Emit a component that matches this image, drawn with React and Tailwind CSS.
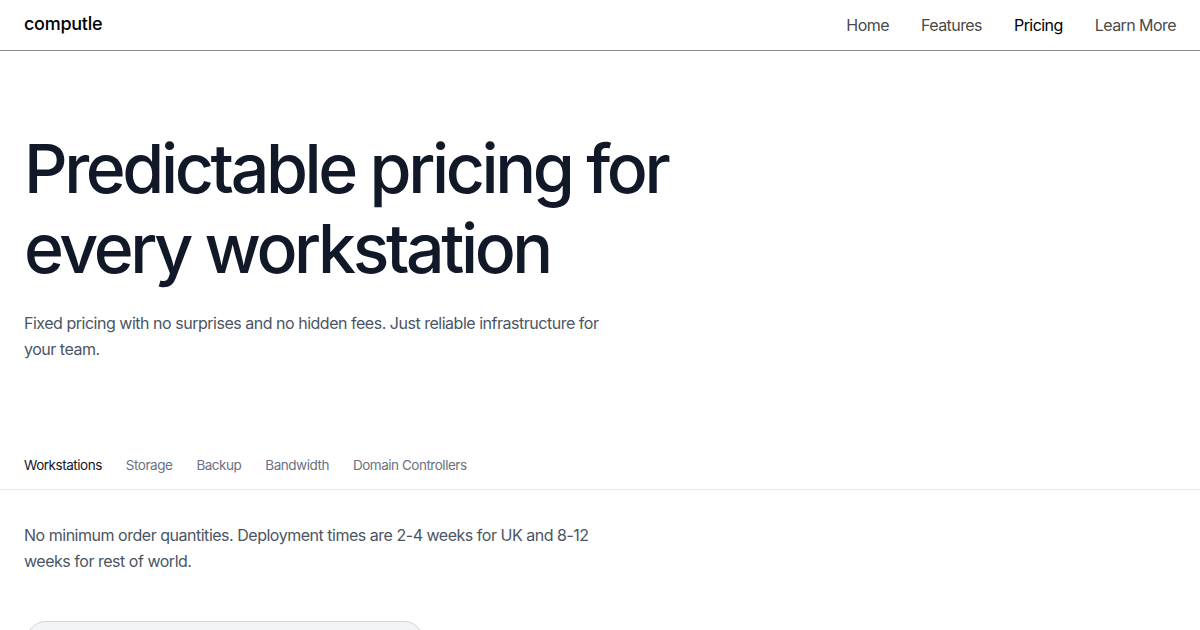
export default function App() {
  const tabs = ["Workstations", "Storage", "Backup", "Bandwidth", "Domain Controllers"];
  return (
    <div className="h-[630px] bg-white font-['Inter',sans-serif] text-gray-900 overflow-hidden">
      <header className="h-[51px] border-b border-[#8a8a8a] px-6 flex items-center justify-between">
        <div className="text-[18px] font-medium tracking-[-0.015em] text-black -mt-[3px]">computle</div>
        <nav className="flex items-center gap-8 text-[16px] tracking-[-0.035em]">
          <span className="text-[#4a4a4a]">Home</span>
          <span className="text-[#4a4a4a]">Features</span>
          <span className="text-black">Pricing</span>
          <span className="text-[#4a4a4a]">Learn More</span>
        </nav>
      </header>
      <section className="px-6 pt-[77px]">
        <h1 className="text-[68px] leading-[80px] font-medium tracking-[-0.05em] text-[#111827] max-w-[700px]">
          Predictable pricing for
          <br />
          every workstation
        </h1>
        <p className="mt-[22px] max-w-[590px] text-[16px] leading-[26px] text-[#4b5563] tracking-[-0.03em]">
          Fixed pricing with no surprises and no hidden fees. Just reliable infrastructure for your team.
        </p>
      </section>
      <div className="mt-[93px] border-b border-gray-200 px-6 pb-[14px] flex gap-6 text-[13.5px] leading-[20px] tracking-[-0.035em]">
        {tabs.map((t, i) => (
          <span key={t} className={i === 0 ? "text-[#111827]" : "text-[#6b7280]"}>{t}</span>
        ))}
      </div>
      <section className="px-6 pt-[32px]">
        <p className="max-w-[590px] text-[16px] leading-[26px] text-[#4b5563] tracking-[-0.03em]">
          No minimum order quantities. Deployment times are 2-4 weeks for UK and 8-12 weeks for rest of world.
        </p>
        <div className="mt-[47px] ml-[2px] w-[398px] h-[120px] rounded-[20px] border border-gray-300 bg-gray-100"></div>
      </section>
    </div>
  );
}
